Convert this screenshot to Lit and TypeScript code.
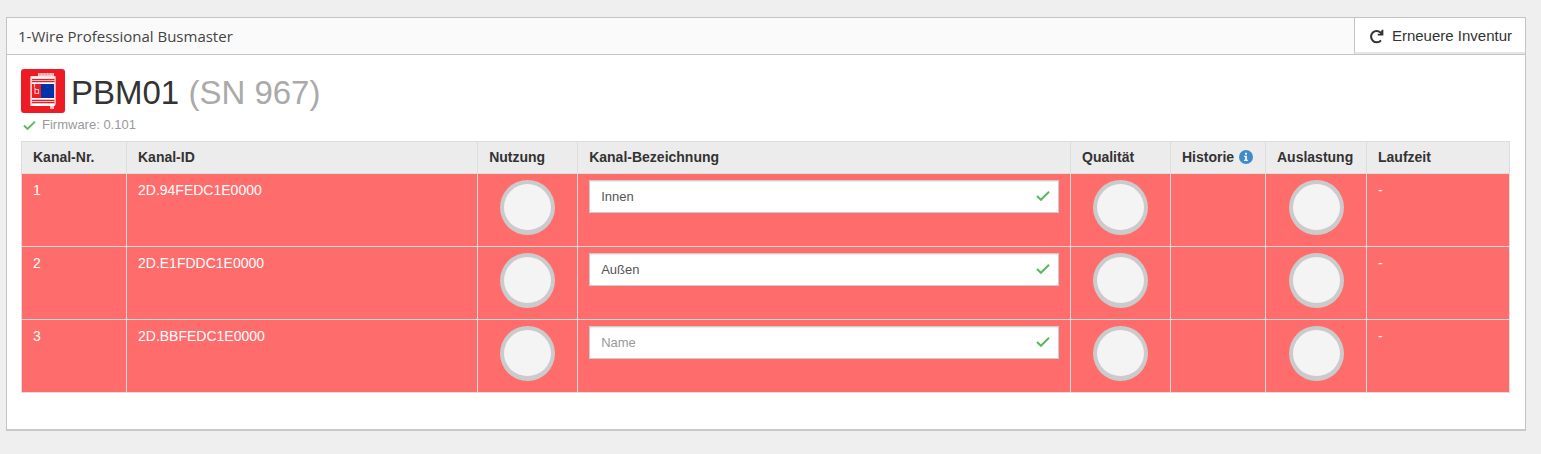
import { LitElement, html, css, nothing } from "lit";
import { customElement, property, state } from "lit/decorators.js";

interface Channel {
  nr: number;
  id: string;
  name: string;
  uptime: string;
}

const check = html`<svg class="check" viewBox="0 0 14 12" aria-hidden="true">
  <path d="M1 6 L4.9 9.8 L13 1.8" fill="none" stroke="#5cb85c" stroke-width="2" />
</svg>`;

@customElement("status-dial")
export class StatusDial extends LitElement {
  static styles = css`
    :host {
      display: block;
      box-sizing: border-box;
      width: 55px;
      height: 55px;
      margin: 0 auto;
      border: 4px solid #cbcbcb;
      border-bottom-width: 5px;
      border-radius: 50%;
      background: #f4f4f4;
    }
  `;
  render() {
    return nothing;
  }
}

@customElement("channel-name")
export class ChannelName extends LitElement {
  @property() value = "";
  @property() label = "";

  static styles = css`
    :host {
      display: grid;
      align-items: center;
    }
    .field,
    .check {
      grid-area: 1 / 1;
    }
    .field {
      box-sizing: border-box;
      width: 100%;
      height: 33px;
      margin: 0;
      padding: 0 36px 0 11px;
      border: 1px solid #ccc;
      border-radius: 0;
      background: #fff;
      box-shadow: inset 0 1px 1px rgba(0, 0, 0, 0.08);
      font: 13px/20px "Liberation Sans", Arial, sans-serif;
      color: #555;
    }
    .field::placeholder {
      color: #999;
      opacity: 1;
    }
    .check {
      justify-self: end;
      width: 14px;
      height: 12px;
      margin-right: 9px;
      margin-bottom: 2px;
      pointer-events: none;
    }
  `;
  render() {
    return html`<input class="field" type="text" placeholder="Name" aria-label=${this.label} .value=${this.value} />${check}`;
  }
}

@customElement("app-root")
export class AppRoot extends LitElement {
  @state() private channels: Channel[] = [
    { nr: 1, id: "2D.94FEDC1E0000", name: "Innen", uptime: "-" },
    { nr: 2, id: "2D.E1FDDC1E0000", name: "Außen", uptime: "-" },
    { nr: 3, id: "2D.BBFEDC1E0000", name: "", uptime: "-" },
  ];

  static styles = css`
    :host {
      display: block;
      box-sizing: border-box;
      min-height: 100vh;
      padding: 17px 15px 23px 6px;
      background: #efefef;
      font: 14px/20px "Liberation Sans", Arial, sans-serif;
      color: #333;
    }
    .panel {
      border: 1px solid #c4c4c4;
      border-bottom: 2px solid #c9c9c9;
      background: #fff;
    }
    .bar {
      display: flex;
      justify-content: space-between;
      align-items: stretch;
      height: 36px;
      border-bottom: 1px solid #c4c4c4;
      background: #fafafa;
    }
    .title {
      margin: 0;
      padding-left: 11px;
      font: 400 15px/37px "Open Sans", sans-serif;
      color: #444;
    }
    .renew {
      display: flex;
      align-items: center;
      gap: 8px;
      padding: 2px 13px 0 14px;
      border: 0;
      border-left: 1px solid #c4c4c4;
      border-bottom: 2px solid #e6e6e6;
      background: #fff;
      font: 15px/20px "Liberation Sans", Arial, sans-serif;
      color: #333;
      cursor: pointer;
    }
    .renew svg {
      width: 15px;
      height: 15px;
    }
    .body {
      padding: 14px 15px 36px 14px;
    }
    .device {
      display: flex;
      align-items: center;
      gap: 6px;
    }
    .logo {
      width: 44px;
      height: 44px;
    }
    .name {
      margin: 0;
      padding-top: 4px;
      font-size: 33px;
      font-weight: 400;
      line-height: 40px;
    }
    .serial {
      color: #aaa;
    }
    .firmware {
      display: flex;
      align-items: center;
      gap: 6px;
      margin: 2px 0 6px;
      padding-left: 2px;
      font-size: 13px;
      color: #999;
    }
    .firmware .check {
      width: 13px;
      height: 11px;
    }
    .channels {
      width: 100%;
      table-layout: fixed;
      border-collapse: collapse;
    }
    .c-nr { width: 105px; }
    .c-id { width: 23.6%; }
    .c-dial { width: 100px; }
    .c-hist { width: 95px; }
    .c-load { width: 101px; }
    .c-time { width: 143px; }
    th,
    td {
      padding: 6px 11px;
      border: 1px solid #ddd;
      text-align: left;
      vertical-align: top;
      white-space: nowrap;
    }
    th {
      padding: 5px 11px 6px;
      height: 20px;
      background: #ececec;
      font-weight: 700;
    }
    td {
      height: 60px;
      background: #ff6c6c;
      color: #fff;
    }
    .with-info {
      display: flex;
      align-items: center;
      gap: 5px;
    }
    .with-info svg {
      width: 14px;
      height: 14px;
    }
  `;

  render() {
    return html`
      <section class="panel">
        <header class="bar">
          <h2 class="title">1-Wire Professional Busmaster</h2>
          <button class="renew" type="button">
            <svg viewBox="0 0 14 14" aria-hidden="true">
              <path d="M11.2 3.6 A5.3 5.3 0 1 0 11.2 10.6" fill="none" stroke="#333" stroke-width="1.9" />
              <path d="M13.4 0.8 V6 H8.2 V4.4 H10.2 L12 0.8 Z" fill="#333" />
            </svg>
            <span>Erneuere Inventur</span>
          </button>
        </header>
        <div class="body">
          <div class="device">
            <svg class="logo" viewBox="0 0 44 44" aria-hidden="true">
              <rect width="44" height="44" rx="3" fill="#ed1c24" />
              <path d="M17 4 H33 V7 H34.5 V35 H33 V40 H29 V37 H9.5 V7 H17 Z" fill="#f9c0c3" />
              <path d="M19 4 V6 M22 4 V6 M25 4 V6 M28 4 V6 M31 4 V6" stroke="#f37c81" />
              <path d="M10 8.5 H34 M10 36 H34" stroke="#fff" stroke-width="2" />
              <path d="M11 10.5 H34 M11 12.5 H34 M11 31.5 H34 M11 33.5 H34" stroke="#ed1c24" />
              <rect x="11" y="15" width="9" height="14" fill="#ed1c24" />
              <rect x="20" y="15" width="13" height="14" fill="#0033a8" />
              <path d="M11 14.5 H34 M11 29.5 H34" stroke="#fff" />
              <path d="M13.5 15 V18.5 M14 19 V24.5 H17.5 V20.5 H14.5" fill="none" stroke="#f9c0c3" stroke-width="1.2" />
              <path d="M10 8 V37 M34 8 V36" stroke="#fbd5d7" />
            </svg>
            <h1 class="name">PBM01 <span class="serial">(SN 967)</span></h1>
          </div>
          <p class="firmware">${check}<span>Firmware: 0.101</span></p>
          <table class="channels">
            <colgroup>
              <col class="c-nr" /><col class="c-id" /><col class="c-dial" /><col />
              <col class="c-dial" /><col class="c-hist" /><col class="c-load" /><col class="c-time" />
            </colgroup>
            <thead>
              <tr>
                <th scope="col">Kanal-Nr.</th>
                <th scope="col">Kanal-ID</th>
                <th scope="col">Nutzung</th>
                <th scope="col">Kanal-Bezeichnung</th>
                <th scope="col">Qualität</th>
                <th scope="col">
                  <span class="with-info">Historie<svg viewBox="0 0 14 14" aria-hidden="true">
                      <circle cx="7" cy="7" r="7" fill="#428bca" />
                      <path d="M6 2.8 H8 V4.7 H6 Z M5 5.7 H8 V9.8 H9 V11 H5 V9.8 H6 V6.9 H5 Z" fill="#ececec" />
                    </svg></span>
                </th>
                <th scope="col">Auslastung</th>
                <th scope="col">Laufzeit</th>
              </tr>
            </thead>
            <tbody>
              ${this.channels.map(
                (c) => html`<tr>
                  <td>${c.nr}</td>
                  <td>${c.id}</td>
                  <td><status-dial></status-dial></td>
                  <td><channel-name .value=${c.name} .label=${`Kanal-Bezeichnung ${c.nr}`}></channel-name></td>
                  <td><status-dial></status-dial></td>
                  <td></td>
                  <td><status-dial></status-dial></td>
                  <td>${c.uptime}</td>
                </tr>`
              )}
            </tbody>
          </table>
        </div>
      </section>
    `;
  }
}
